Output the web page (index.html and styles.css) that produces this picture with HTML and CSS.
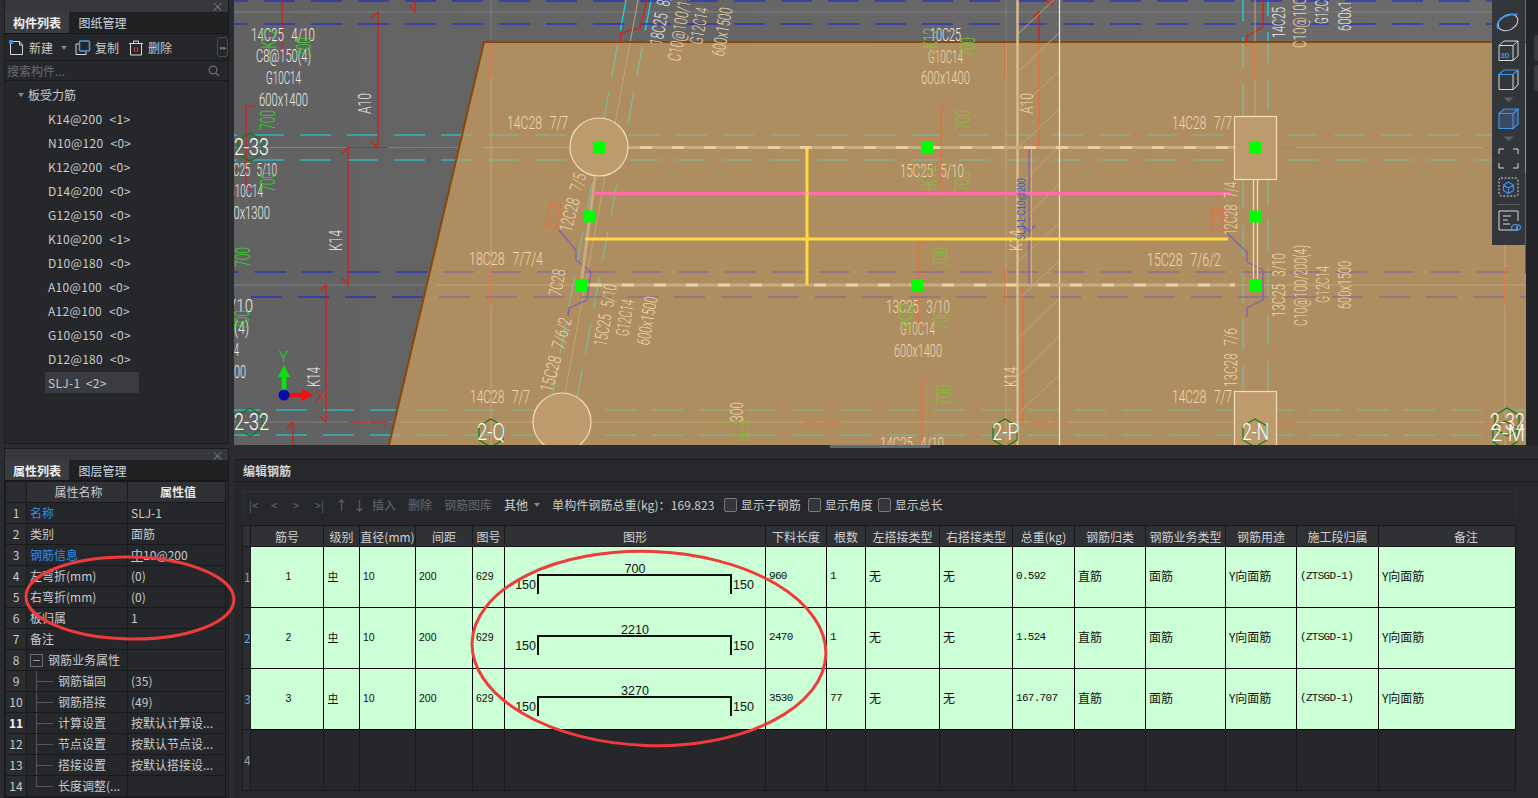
FILE: index.html
```html
<!DOCTYPE html>
<html lang="zh">
<head>
<meta charset="utf-8">
<title>编辑钢筋</title>
<link rel="stylesheet" href="styles.css">
</head>
<body>
<div class="app">
  <aside class="side">
    <section class="panel panel-top">
      <div class="strip"><span class="close">×</span></div>
      <div class="tabs"><span class="tab on">构件列表</span><span class="tab">图纸管理</span></div>
      <div class="tools">
        <svg class="ico" viewBox="0 0 16 16"><path class="w" d="M1.5 3.5v11h12V5l-3-3.500H4"/><path class="w" d="M10.500 1.500v3.500h3"/><path class="bl" d="M0 0h4v4H0z"/></svg>
        <span class="tl">新建</span><i class="caret"></i>
        <svg class="ico i2" viewBox="0 0 16 16"><path class="w" d="M4 4H1v10.500h10V12"/><rect class="b" x="4.500" y="1" width="10" height="10" rx="1"/></svg>
        <span class="tl">复制</span>
        <svg class="ico i3" viewBox="0 0 16 16"><path class="w" d="M1 3.500h14M5.500 3.500V1h5v2.500M2.500 3.500v11.500h11V3.500"/><path class="r" d="M6.500 7v5M9.500 7v5"/></svg>
        <span class="tl">删除</span>
        <span class="more">▸▸</span>
      </div>
      <div class="search"><span>搜索构件...</span>
        <svg class="find" viewBox="0 0 12 12"><circle cx="5" cy="5" r="3.800"/><path d="M8 8l3 3"/></svg>
      </div>
      <div class="tree">
        <div class="root"><i class="caret"></i>板受力筋</div>
        <div class="leaf">K14@200 &lt;1&gt;</div>
        <div class="leaf">N10@120 &lt;0&gt;</div>
        <div class="leaf">K12@200 &lt;0&gt;</div>
        <div class="leaf">D14@200 &lt;0&gt;</div>
        <div class="leaf">G12@150 &lt;0&gt;</div>
        <div class="leaf">K10@200 &lt;1&gt;</div>
        <div class="leaf">D10@180 &lt;0&gt;</div>
        <div class="leaf">A10@100 &lt;0&gt;</div>
        <div class="leaf">A12@100 &lt;0&gt;</div>
        <div class="leaf">G10@150 &lt;0&gt;</div>
        <div class="leaf">D12@180 &lt;0&gt;</div>
        <div class="leaf sel">SLJ-1 &lt;2&gt;</div>
      </div>
    </section>
    <section class="panel panel-bot">
      <div class="strip"><span class="close">×</span></div>
      <div class="tabs"><span class="tab on">属性列表</span><span class="tab">图层管理</span></div>
      <table class="props">
        <thead><tr><th class="pn"></th><th class="pk">属性名称</th><th class="pv strong">属性值</th></tr></thead>
        <tbody>
          <tr><td class="pn">1</td><td class="blue">名称</td><td>SLJ-1</td></tr>
          <tr><td class="pn">2</td><td>类别</td><td>面筋</td></tr>
          <tr><td class="pn">3</td><td class="blue">钢筋信息</td><td><u class="grade">中</u>10@200</td></tr>
          <tr><td class="pn">4</td><td>左弯折(mm)</td><td>(0)</td></tr>
          <tr><td class="pn">5</td><td>右弯折(mm)</td><td>(0)</td></tr>
          <tr><td class="pn">6</td><td>板归属</td><td>1</td></tr>
          <tr><td class="pn">7</td><td>备注</td><td></td></tr>
          <tr><td class="pn">8</td><td><div class="node"><i class="minus"></i>钢筋业务属性</div></td><td></td></tr>
          <tr><td class="pn">9</td><td class="sub"><div class="node"><i class="line"></i>钢筋锚固</div></td><td>(35)</td></tr>
          <tr><td class="pn">10</td><td class="sub"><div class="node"><i class="line"></i>钢筋搭接</div></td><td>(49)</td></tr>
          <tr><td class="pn bold">11</td><td class="sub"><div class="node"><i class="line"></i>计算设置</div></td><td>按默认计算设...</td></tr>
          <tr><td class="pn">12</td><td class="sub"><div class="node"><i class="line"></i>节点设置</div></td><td>按默认节点设...</td></tr>
          <tr><td class="pn">13</td><td class="sub"><div class="node"><i class="line"></i>搭接设置</div></td><td>按默认搭接设...</td></tr>
          <tr><td class="pn">14</td><td class="sub"><div class="node"><i class="line end"></i>长度调整(...</div></td><td></td></tr>
        </tbody>
      </table>
    </section>
  </aside>

  <main class="main">
    <div class="canvas-row">
      <div class="canvas">
        <svg class="cad" viewBox="234 0 1292 445" width="1292" height="445">
          <defs>
            <linearGradient id="sky"><stop class="s0" offset="0"/><stop class="s1" offset="1"/></linearGradient>
            <clipPath id="slab"><polygon points="484,42 1526,42 1526,445 389,445"/></clipPath>
            <polygon id="hex" points="0,-14 12,-7 12,7 0,14 -12,7 -12,-7"/>
            <g id="cyan">
              <path d="M206 135H1526M206 160H1526M229 410H1526M229 435H1526"/>
              <path d="M626 0L549 414M651 0L574 414M1243 -10V445M1268 -15V445"/>
            </g>
            <g id="blue">
              <path d="M217 24H1526M208 272H1526M204 297H1526M217 1H1526"/>
            </g>
            <g id="reds">
              <path d="M282 0V53H291M255 106H246V189H255M371 18L378 12V147.500M371 141L378 147.500M348 147.500H388M341 154L348 147.500V285M341 278L348 285M319 291L326 285V422M319 416L326 422M286 428L293 422V445M415 0V12L409 5M620 43L621 33L640 28L647 0M1263 0V27L1247 36L1246 46"/>
              <path d="M349 422H367M370 422H388M491 40V78M491 268V305M1005 40V78M1005 267V305M950 106H941V189H950M1033 18L1039 12V147.500M1033 141L1039 147.500M1028 147.500H1068M1023 154L1029 147.500M927 243H918V327H927M1017 291L1023 285V422M1017 416L1023 422M931 381H922V445"/>
              <path d="M803 422H821M823 422H842M1030 422H1048M1050 422H1068M1277 147.500H1296M1483 147.500H1497M1277 422H1296M1483 422H1520M1505 267V305M1255 43V79M1052 0V5L1046 0"/>
            </g>
          </defs>

          <rect fill="url(#sky)" x="234" y="0" width="1292" height="445"/>
          <path class="center" d="M234 12H1526M234 147.500H1526M234 285H1526M234 422H1526M491 0V445M1006 0V445"/>
          <use href="#cyan" class="c-bright"/>
          <use href="#blue" class="b-bright"/>
          <use href="#reds" class="r-bright"/>

          <polygon class="slabfill" points="484,42 1526,42 1526,445 389,445"/>
          <path class="center-s" d="M484 147.500H1526M436 285H1526M400 422H1526M491 42V445M1006 42V445M1255 0V116M1505 42V445M638 0L560 420"/>
          <use href="#cyan" class="c-mute" clip-path="url(#slab)"/>
          <use href="#blue" class="b-mute" clip-path="url(#slab)"/>
          <use href="#reds" class="r-mute" clip-path="url(#slab)"/>
          <path class="edge" d="M389 445L484 42H1526"/>

          <path class="hatch" d="M1018 34L1060 -6M1018 72L1060 32M1018 110L1060 70M1018 148L1060 108M1018 186L1060 146M1018 224L1060 184M1018 262L1060 222M1018 300L1060 260M1018 338L1060 298M1018 376L1060 336M1018 414L1060 374"/>
          <path class="wall" d="M1017.500 0V445"/>
          <path class="wall2" d="M1059.500 0V445"/>
          <path class="purple" d="M559 230L576 250V260L591 272L587 300L569 308L568 316M1227 233L1247 252V262L1263 270V300L1247 308V317M1029 147V285M1023 225L1029 232L1035 225"/>
          <path class="gridgrey" d="M1031.500 147V285"/>

          <path class="beam" d="M628 147.500H1235M585 285H1235M595 177L581 285"/>
          <path class="beamd" d="M640 147.500H1235M590 285H1235"/>
          <path class="beamv" d="M1253.500 180V285M1257.500 180V285"/>
          <path class="pink" d="M593 193.500H1231"/>
          <path class="yellow" d="M585 239H1228M807 148V285"/>

          <circle class="col" cx="599" cy="147" r="29"/>
          <circle class="col" cx="562" cy="422" r="29"/>
          <rect class="col" x="1234.500" y="116.500" width="42" height="63"/>
          <rect class="col" x="1234.500" y="391.500" width="42" height="60"/>

          <g class="sq">
            <rect x="593" y="141.500" width="12" height="12"/><rect x="921" y="141.500" width="12" height="12"/>
            <rect x="584" y="210.500" width="12" height="12"/><rect x="911" y="279" width="12" height="12"/>
            <rect x="575" y="279" width="12" height="12"/><rect x="1249" y="141.500" width="12" height="12"/>
            <rect x="1249" y="210.500" width="12" height="12"/><rect x="1249" y="279" width="12" height="12"/>
          </g>

          <g class="hexes">
            <use href="#hex" x="250" y="147"/><use href="#hex" x="250" y="422"/><use href="#hex" x="491" y="433"/>
            <use href="#hex" x="1005" y="433"/><use href="#hex" x="1255" y="433"/><use href="#hex" x="1507" y="422"/><use href="#hex" x="1505" y="435"/>
          </g>
          <path class="tick" d="M714 422H734M727 435H748M727 422H748M740 416L750 428M740 428L750 416M740 429L750 441M740 441L750 429"/>

          <g class="t wt">
            <text x="251" y="41" textLength="64" lengthAdjust="spacingAndGlyphs">14C25 4/10</text>
            <text x="256" y="62" textLength="55" lengthAdjust="spacingAndGlyphs">C8@150(4)</text>
            <text x="266" y="84" textLength="35" lengthAdjust="spacingAndGlyphs">G10C14</text>
            <text x="259" y="106" textLength="49" lengthAdjust="spacingAndGlyphs">600x1400</text>
            <text x="222" y="176" textLength="55" lengthAdjust="spacingAndGlyphs">15C25 5/10</text>
            <text x="228" y="197" textLength="35" lengthAdjust="spacingAndGlyphs">G10C14</text>
            <text x="221" y="219" textLength="49" lengthAdjust="spacingAndGlyphs">600x1300</text>
            <text x="222" y="312" textLength="31" lengthAdjust="spacingAndGlyphs">4/10</text>
            <text x="234" y="334" textLength="15" lengthAdjust="spacingAndGlyphs">(4)</text>
            <text x="234" y="356" textLength="5" lengthAdjust="spacingAndGlyphs">4</text>
            <text x="234" y="378" textLength="12" lengthAdjust="spacingAndGlyphs">00</text>
            <text x="930" y="41" textLength="31" lengthAdjust="spacingAndGlyphs">10C25</text>
            <text transform="rotate(-90 371 114)" x="371" y="114" textLength="21" lengthAdjust="spacingAndGlyphs">A10</text>
            <text transform="rotate(-90 342 251)" x="342" y="251" textLength="21" lengthAdjust="spacingAndGlyphs">K14</text>
            <text transform="rotate(-90 320 387)" x="320" y="387" textLength="20" lengthAdjust="spacingAndGlyphs">K14</text>
            <text transform="rotate(-90 1285 38)" x="1285" y="38" textLength="31" lengthAdjust="spacingAndGlyphs">14C25</text>
            <text transform="rotate(-90 1328 24)" x="1328" y="24" textLength="35" lengthAdjust="spacingAndGlyphs">G12C14</text>
            <text transform="rotate(-90 1351 31)" x="1351" y="31" textLength="49" lengthAdjust="spacingAndGlyphs">600x1500</text>
            <text transform="rotate(-80 662 46)" x="662" y="46" textLength="63" lengthAdjust="spacingAndGlyphs">18C25 8/10</text>
          </g>
          <g class="t tn">
            <text x="507" y="129" textLength="61" lengthAdjust="spacingAndGlyphs">14C28 7/7</text>
            <text x="469" y="265" textLength="74" lengthAdjust="spacingAndGlyphs">18C28 7/7/4</text>
            <text x="470" y="403" textLength="60" lengthAdjust="spacingAndGlyphs">14C28 7/7</text>
            <text x="1172" y="129" textLength="60" lengthAdjust="spacingAndGlyphs">14C28 7/7</text>
            <text x="1147" y="266" textLength="74" lengthAdjust="spacingAndGlyphs">15C28 7/6/2</text>
            <text x="1172" y="403" textLength="60" lengthAdjust="spacingAndGlyphs">14C28 7/7</text>
            <text x="900" y="177" textLength="64" lengthAdjust="spacingAndGlyphs">15C25 5/10</text>
            <text x="928" y="63" textLength="35" lengthAdjust="spacingAndGlyphs">G10C14</text>
            <text x="921" y="84" textLength="49" lengthAdjust="spacingAndGlyphs">600x1400</text>
            <text x="886" y="313" textLength="64" lengthAdjust="spacingAndGlyphs">13C25 3/10</text>
            <text x="900" y="335" textLength="35" lengthAdjust="spacingAndGlyphs">G10C14</text>
            <text x="894" y="357" textLength="48" lengthAdjust="spacingAndGlyphs">600x1400</text>
            <text x="880" y="450" textLength="64" lengthAdjust="spacingAndGlyphs">14C25 4/10</text>
            <text transform="rotate(-80 680 62)" x="680" y="62" textLength="88" lengthAdjust="spacingAndGlyphs">C10@100/150(4)</text>
            <text transform="rotate(-80 702 45)" x="702" y="45" textLength="37" lengthAdjust="spacingAndGlyphs">G12C14</text>
            <text transform="rotate(-80 724 57)" x="724" y="57" textLength="49" lengthAdjust="spacingAndGlyphs">600x1500</text>
            <text transform="rotate(-75 571 233)" x="571" y="233" textLength="60" lengthAdjust="spacingAndGlyphs">12C28 7/5</text>
            <text transform="rotate(-80 561 297)" x="561" y="297" textLength="27" lengthAdjust="spacingAndGlyphs">7C28</text>
            <text transform="rotate(-80 606 347)" x="606" y="347" textLength="63" lengthAdjust="spacingAndGlyphs">15C25 5/10</text>
            <text transform="rotate(-80 628 337)" x="628" y="337" textLength="37" lengthAdjust="spacingAndGlyphs">G12C14</text>
            <text transform="rotate(-80 649 346)" x="649" y="346" textLength="49" lengthAdjust="spacingAndGlyphs">600x1500</text>
            <text transform="rotate(-75 552 393)" x="552" y="393" textLength="76" lengthAdjust="spacingAndGlyphs">15C28 7/6/2</text>
            <text transform="rotate(-90 1306 48)" x="1306" y="48" textLength="88" lengthAdjust="spacingAndGlyphs">C10@100/150(4)</text>
            <text transform="rotate(-90 1237 235)" x="1237" y="235" textLength="53" lengthAdjust="spacingAndGlyphs">12C28 7/4</text>
            <text transform="rotate(-90 1285 317)" x="1285" y="317" textLength="64" lengthAdjust="spacingAndGlyphs">13C25 3/10</text>
            <text transform="rotate(-90 1307 326)" x="1307" y="326" textLength="81" lengthAdjust="spacingAndGlyphs">C10@100/200(4)</text>
            <text transform="rotate(-90 1329 303)" x="1329" y="303" textLength="37" lengthAdjust="spacingAndGlyphs">G12C14</text>
            <text transform="rotate(-90 1351 309)" x="1351" y="309" textLength="48" lengthAdjust="spacingAndGlyphs">600x1500</text>
            <text transform="rotate(-90 1237 387)" x="1237" y="387" textLength="59" lengthAdjust="spacingAndGlyphs">13C28 7/6</text>
            <text transform="rotate(-90 1033 114)" x="1033" y="114" textLength="21" lengthAdjust="spacingAndGlyphs">A10</text>
            <text transform="rotate(-90 1022 251)" x="1022" y="251" textLength="21" lengthAdjust="spacingAndGlyphs">K14</text>
            <text transform="rotate(-90 1017 387)" x="1017" y="387" textLength="20" lengthAdjust="spacingAndGlyphs">K14</text>
            <text transform="rotate(-90 743 422)" x="743" y="422" textLength="20" lengthAdjust="spacingAndGlyphs">300</text>
          </g>
          <g class="t or">
            <text transform="rotate(-80 558 230)" x="558" y="230" textLength="27" lengthAdjust="spacingAndGlyphs">5C28</text>
            <text transform="rotate(-90 1225 233)" x="1225" y="233" textLength="26" lengthAdjust="spacingAndGlyphs">5C28</text>
          </g>
          <g class="t gb">
            <text transform="rotate(-90 275 130)" x="275" y="130" textLength="20" lengthAdjust="spacingAndGlyphs">700</text>
            <text transform="rotate(-90 275 192)" x="275" y="192" textLength="20" lengthAdjust="spacingAndGlyphs">700</text>
            <text transform="rotate(-90 311 57)" x="311" y="57" textLength="20" lengthAdjust="spacingAndGlyphs">700</text>
            <text transform="rotate(-90 276 55)" x="276" y="55" textLength="27" lengthAdjust="spacingAndGlyphs">+K12</text>
            <text transform="rotate(-90 250 267)" x="250" y="267" textLength="20" lengthAdjust="spacingAndGlyphs">700</text>
            <text transform="rotate(-90 249 330)" x="249" y="330" textLength="20" lengthAdjust="spacingAndGlyphs">700</text>
          </g>
          <g class="t gm">
            <text transform="rotate(-90 970 130)" x="970" y="130" textLength="20" lengthAdjust="spacingAndGlyphs">700</text>
            <text transform="rotate(-90 970 192)" x="970" y="192" textLength="20" lengthAdjust="spacingAndGlyphs">700</text>
            <text transform="rotate(-90 975 57)" x="975" y="57" textLength="20" lengthAdjust="spacingAndGlyphs">700</text>
            <text transform="rotate(-90 938 55)" x="938" y="55" textLength="27" lengthAdjust="spacingAndGlyphs">+K12</text>
            <text transform="rotate(-90 936 193)" x="936" y="193" textLength="27" lengthAdjust="spacingAndGlyphs">+K12</text>
            <text transform="rotate(-90 948 267)" x="948" y="267" textLength="20" lengthAdjust="spacingAndGlyphs">700</text>
            <text transform="rotate(-90 948 330)" x="948" y="330" textLength="20" lengthAdjust="spacingAndGlyphs">700</text>
            <text transform="rotate(-90 913 330)" x="913" y="330" textLength="27" lengthAdjust="spacingAndGlyphs">+K12</text>
            <text transform="rotate(-90 951 405)" x="951" y="405" textLength="20" lengthAdjust="spacingAndGlyphs">700</text>
          </g>
          <text class="tiny" transform="rotate(-90 1025 240)" x="1025" y="240" textLength="62" lengthAdjust="spacingAndGlyphs">SLJ-1:C10@200</text>
          <g class="lbl">
            <text x="234" y="155" textLength="35" lengthAdjust="spacingAndGlyphs">2-33</text>
            <text x="234" y="430" textLength="35" lengthAdjust="spacingAndGlyphs">2-32</text>
            <text x="477" y="440" textLength="28" lengthAdjust="spacingAndGlyphs">2-Q</text>
            <text x="992" y="440" textLength="27" lengthAdjust="spacingAndGlyphs">2-P</text>
            <text x="1242" y="440" textLength="27" lengthAdjust="spacingAndGlyphs">2-N</text>
            <text x="1490" y="430" textLength="35" lengthAdjust="spacingAndGlyphs">2-32</text>
            <text x="1491" y="441" textLength="34" lengthAdjust="spacingAndGlyphs">2-M</text>
          </g>
          <g class="axis">
            <path class="ay" d="M284 395V376"/>
            <path class="ayh" d="M278 377H290L284 365Z"/>
            <path class="ax" d="M289 395H303"/>
            <path class="axh" d="M302 389V401L314 395Z"/>
            <circle cx="284" cy="395" r="5.500"/>
            <text class="ty" x="279" y="362">Y</text>
            <text class="tx" x="316" y="402">X</text>
          </g>
        </svg>
        <div class="view-tools">
          <svg viewBox="0 0 33 245" width="33" height="245">
            <ellipse class="vw" cx="16" cy="22.500" rx="10.500" ry="7.500" transform="rotate(-28 16 22.500)"/>
            <path class="vb2" d="M6.500 29C2.500 23 10 13.500 25.500 14.500"/>
            <path class="vw" d="M7 45.500h14v15H7zM7 45.500l5-4.500h14v15l-5 4.500M21 45.500l5-4.500"/>
            <text class="v3d" x="8.500" y="58">3D</text>
            <path class="vw" d="M7 74.500v15h14v-15M21 89.500l5-4.500V71"/>
            <path class="vb" d="M7 74.500l5-4.500h14l-5 4.500z"/>
            <path class="vtri2" d="M11.500 97.500h10l-5 4.500z"/>
            <path class="vfill" d="M7 113.500h14v15H7zM21 128.500l5-4.500v-15l-5 4.500zM7 113.500l5-4.500h14l-5 4.500z"/>
            <path class="vtri2" d="M11.500 136.500h10l-5 4.500z"/>
            <path class="vw" d="M7 154v-5h5M21 149h5v5M26 163v5h-5M12 168H7v-5"/>
            <rect class="vdash" x="7" y="178" width="19" height="18" rx="2"/>
            <path class="vb" d="M16.500 182l5 3v5.500l-5 3-5-3V185zM11.500 185l5 3 5-3M16.500 188v5.500"/>
            <path class="vsep" d="M5 204.500h23"/>
            <path class="vw" d="M25 226v4H7v-19h19v10"/>
            <path class="vw" d="M11 216h8M11 220h5M11 224h7"/>
            <ellipse class="vb" cx="24" cy="227.500" rx="4.500" ry="2.800"/>
          </svg>
        </div>
        <div class="vscroll"></div>
      </div>
      <div class="rstrip"><span class="rb"></span><span class="rb"></span></div>
    </div>
    <div class="splitter"><span class="grip"></span></div>
    <div class="head">编辑钢筋</div>
    <div class="editor">
      <div class="bar">
        <span class="dim nav">|&lt;</span><span class="dim nav">&lt;</span><span class="dim nav">&gt;</span><span class="dim nav">&gt;|</span>
        <span class="dim arrow">↑</span><span class="dim arrow">↓</span>
        <span class="dim act first">插入</span><span class="dim act">删除</span><span class="dim act">钢筋图库</span>
        <span class="act lit">其他</span><i class="caret"></i>
        <span class="total">单构件钢筋总重(kg)：169.823</span>
        <i class="chk c1"></i><span>显示子钢筋</span>
        <i class="chk"></i><span>显示角度</span>
        <i class="chk"></i><span>显示总长</span>
      </div>
      <table class="grid">
        <colgroup>
          <col class="w8"><col class="w73"><col class="w36"><col class="w56"><col class="w57"><col class="w32"><col class="w261"><col class="w61"><col class="w39"><col class="w74"><col class="w73b"><col class="w62"><col class="w71"><col class="w80"><col class="w71"><col class="w82"><col class="w137">
        </colgroup>
        <thead>
          <tr><th></th><th>筋号</th><th>级别</th><th>直径(mm)</th><th>间距</th><th>图号</th><th>图形</th><th>下料长度</th><th>根数</th><th>左搭接类型</th><th>右搭接类型</th><th>总重(kg)</th><th>钢筋归类</th><th>钢筋业务类型</th><th>钢筋用途</th><th>施工段归属</th><th class="memo">备注</th></tr>
        </thead>
        <tbody>
          <tr class="data"><td class="rh">1</td><td class="ctr n">1</td><td class="gr"><u class="grade">中</u></td><td class="n">10</td><td class="n">200</td><td class="n">629</td>
            <td class="shape"><svg viewBox="0 0 261 60" width="261" height="60"><path d="M33 47V28H226V47"/><text class="s-m" x="130" y="26">700</text><text class="s-l" x="31" y="42">150</text><text class="s-r" x="228" y="42">150</text></svg></td>
            <td class="m">960</td><td class="m">1</td><td>无</td><td>无</td><td class="m">0.592</td><td>直筋</td><td>面筋</td><td>Y向面筋</td><td class="m">(ZTSGD-1)</td><td>Y向面筋</td></tr>
          <tr class="data"><td class="rh">2</td><td class="ctr n">2</td><td class="gr"><u class="grade">中</u></td><td class="n">10</td><td class="n">200</td><td class="n">629</td>
            <td class="shape"><svg viewBox="0 0 261 60" width="261" height="60"><path d="M33 47V28H226V47"/><text class="s-m" x="130" y="26">2210</text><text class="s-l" x="31" y="42">150</text><text class="s-r" x="228" y="42">150</text></svg></td>
            <td class="m">2470</td><td class="m">1</td><td>无</td><td>无</td><td class="m">1.524</td><td>直筋</td><td>面筋</td><td>Y向面筋</td><td class="m">(ZTSGD-1)</td><td>Y向面筋</td></tr>
          <tr class="data"><td class="rh">3</td><td class="ctr n">3</td><td class="gr"><u class="grade">中</u></td><td class="n">10</td><td class="n">200</td><td class="n">629</td>
            <td class="shape"><svg viewBox="0 0 261 60" width="261" height="60"><path d="M33 47V28H226V47"/><text class="s-m" x="130" y="26">3270</text><text class="s-l" x="31" y="42">150</text><text class="s-r" x="228" y="42">150</text></svg></td>
            <td class="m">3530</td><td class="m">77</td><td>无</td><td>无</td><td class="m">167.707</td><td>直筋</td><td>面筋</td><td>Y向面筋</td><td class="m">(ZTSGD-1)</td><td>Y向面筋</td></tr>
          <tr class="empty"><td class="rh">4</td><td></td><td></td><td></td><td></td><td></td><td></td><td></td><td></td><td></td><td></td><td></td><td></td><td></td><td></td><td></td><td></td></tr>
        </tbody>
      </table>
    </div>
  </main>
</div>
<svg class="marks" viewBox="0 0 1538 798" width="1538" height="798">
  <ellipse cx="130" cy="598" rx="104" ry="41" transform="rotate(1 130 598)"/>
  <ellipse cx="649" cy="648.500" rx="177" ry="97" transform="rotate(2 649 648)"/>
</svg>
</body>
</html>
```
FILE: styles.css
```css
* { box-sizing: border-box; }
html, body { margin: 0; height: 100%; }
body {
  width: 1538px; height: 798px; overflow: hidden; position: relative;
  background: #2b2d30; color: #c9cbcd;
  font: 12px/20px "Noto Sans CJK SC", "Liberation Sans", sans-serif;
}
i { display: block; font-style: normal; }
.app { display: flex; height: 798px; }

/* left column */
.side { width: 234px; flex: none; padding: 0 5px 0 4px; display: flex; flex-direction: column; gap: 4px; background: #2a2c2f; }
.panel { background: #25272a; border: 1px solid #1b1c1e; border-top: 0; }
.panel-top { height: 444px; }
.panel-bot { height: 350px; border-top: 1px solid #1b1c1e; }
.strip { height: 12px; background: #36383c; display: flex; justify-content: flex-end; }
.panel-bot .strip { height: 11px; }
.close { color: #77797c; font-size: 13px; line-height: 11px; margin-right: 4px; }
.tabs { height: 22px; display: flex; background: #1f2123; border-bottom: 1px solid #17181a; }
.panel-bot .tabs { height: 21px; }
.tab { width: 67px; text-align: center; line-height: 22px; color: #c7d5e2; }
.panel-bot .tab { line-height: 21px; }
.tab.on { background: #3a3c40; color: #f0f0f0; font-weight: 700; width: 64px; }
.tools { height: 27px; display: flex; align-items: center; padding: 2px 0 0 4px; border-bottom: 1px solid #1a1b1d; position: relative; }
.ico { width: 16px; height: 16px; flex: none; }
.ico path, .ico rect { fill: none; stroke-width: 1; }
.ico .w { stroke: #d8d8d8; }
.ico .b { stroke: #4a9cf0; stroke-width: 1.5; fill: #25272a; }
.ico .r { stroke: #e03a3a; }
.ico .bl { fill: #3d8fe6; stroke: none; }
.i2 { margin-left: 8px; }
.i3 { margin-left: 9px; }
.tl { margin-left: 4px; color: #c9cbcd; }
.caret { width: 0; height: 0; border: 3px solid transparent; border-top: 4px solid #85878a; border-bottom: 0; }
.tools .caret { margin: 0 0 0 8px; }
.more { position: absolute; left: 212px; top: 3px; width: 11px; height: 20px; border: 1px solid #4a4c50; border-radius: 3px; color: #77797c; font-size: 7px; line-height: 18px; text-align: center; letter-spacing: -1px; }
.search { height: 20px; padding: 0 8px 0 2px; display: flex; justify-content: space-between; align-items: center; color: #6b6d70; border-bottom: 1px solid #1a1b1d; }
.find { width: 12px; height: 12px; }
.find circle, .find path { fill: none; stroke: #6b6d70; stroke-width: 1.3; }
.tree { padding-top: 2px; }
.root { height: 24px; line-height: 24px; padding-left: 13px; display: flex; align-items: center; color: #c9cbcd; }
.root .caret { margin-right: 4px; }
.leaf { height: 24px; line-height: 24px; padding-left: 43px; letter-spacing: .3px; word-spacing: 4px; }
.leaf.sel { width: 94px; height: 21px; line-height: 21px; margin: 1px 0 0 40px; padding-left: 3px; background: #3a3c40; word-spacing: 2.500px; }

.props { width: 221px; margin-left: 0; border-collapse: collapse; table-layout: fixed; }
.props th, .props td { height: 21px; padding: 0 0 0 3px; border: 1px solid #191a1c; font-weight: 400; white-space: nowrap; overflow: hidden; }
.props th { background: #2f3135; text-align: center; }
.props .pn { width: 21px; padding: 0; text-align: center; background: #2a2c2f; }
.props .pk { width: 101px; }
.props .strong { font-weight: 700; color: #e4e4e4; }
.props .blue { color: #2f8fe8; }
.props .bold { font-weight: 700; color: #eee; }
.props .sub { padding-left: 3px; }
.node { display: flex; align-items: center; height: 20px; }
.minus { width: 13px; height: 13px; border: 1px solid #6d6f72; margin-right: 5px; position: relative; flex: none; background: linear-gradient(#9a9a9a, #9a9a9a) center / 7px 1px no-repeat; }
.line { width: 28px; height: 21px; flex: none; background: linear-gradient(#55575a, #55575a) 6px 0 / 1px 100% no-repeat, linear-gradient(#55575a, #55575a) 6px 50% / 17px 1px no-repeat; }
.line.end { background: linear-gradient(#55575a, #55575a) 6px 0 / 1px 50% no-repeat, linear-gradient(#55575a, #55575a) 6px 50% / 17px 1px no-repeat; }
.grade { text-decoration: underline; text-underline-offset: 1px; }

/* right column */
.main { flex: 1; min-width: 0; display: flex; flex-direction: column; }
.canvas-row { height: 445px; display: flex; }
.canvas { width: 1292px; height: 445px; position: relative; overflow: hidden; }
.cad { display: block; }
.rstrip { flex: 1; background: #232528; padding: 35px 0 0 8px; display: flex; flex-direction: column; gap: 4px; }
.rb { height: 26px; background: #3a3c40; border-radius: 2px 0 0 2px; }
.splitter { height: 15px; background: #2b2d30; position: relative; border-bottom: 1px solid #1b1c1e; }
.grip { display: block; width: 100px; height: 3px; margin-left: 596px; background: #5d6a78; }
.head { height: 22px; line-height: 22px; padding-left: 9px; background: #26282b; color: #d4d4d4; font-weight: 700; border-bottom: 1px solid #1b1c1e; }
.editor { flex: 1; padding: 9px 0 0 9px; background: #26282b; }
.bar { width: 1273px; height: 27px; display: flex; align-items: center; border: 1px solid #2f3134; border-width: 1px 1px 0 1px; padding-left: 5px; margin-bottom: 7px; color: #c9cbcd; }
.dim { color: #66686b; }
.nav { width: 22px; font-size: 11px; }
.arrow { width: 18px; font-size: 13px; margin-left: 0; }
.nav + .arrow { margin-left: -2px; }
.act { margin-right: 12px; }
.act.first { margin-left: 1px; }
.lit { color: #d0d0d0; margin-right: 6px; }
.bar .caret { margin-right: 12px; }
.total { margin-right: 9px; letter-spacing: .1px; }
.chk { width: 13px; height: 14px; border: 1px solid #77797c; border-radius: 2px; background: #34363a; margin-right: 4px; }
.bar .chk + span + .chk { margin-left: 7px; }
.bar .chk + span + .chk + span + .chk { margin-left: 5px; }

.grid { width: 1273px; margin-left: -1px; border-collapse: collapse; table-layout: fixed; }
.w8 { width: 8px; } .w73 { width: 73px; } .w36 { width: 36px; } .w56 { width: 56px; } .w57 { width: 57px; }
.w32 { width: 32px; } .w261 { width: 261px; } .w61 { width: 61px; } .w39 { width: 39px; } .w74 { width: 74px; }
.w73b { width: 73px; } .w62 { width: 62px; } .w71 { width: 71px; } .w80 { width: 80px; } .w82 { width: 82px; } .w137 { width: 137px; }
.grid th { height: 20px; line-height: 18px; background: #2f3135; color: #cfd0d2; font-weight: 400; padding: 2px 0 0; border: 1px solid #191a1c; white-space: nowrap; overflow: hidden; }
.grid th.memo { padding-left: 38px; }
.grid td { height: 61px; padding: 0 0 3px 3px; white-space: nowrap; overflow: hidden; }
.data td { background: #cbffd5; color: #111; border: 1px solid #000; }
.data .rh, .empty .rh { background: #2b2d30; color: #6fa6cf; padding: 0 0 0 1px; border: 1px solid #191a1c; }
.empty .rh { color: #9a9c9e; }
.empty td { background: #25272a; border: 1px solid #191a1c; }
.ctr { text-align: center; }
.data .gr { padding-left: 4px; font-size: 10px; }
.m { font-family: "Liberation Mono", monospace; font-size: 11px; letter-spacing: -.7px; }
.n { font-family: "Liberation Sans", sans-serif; font-size: 10.500px; }
.shape { padding: 0 !important; }
.shape svg { display: block; }
.shape path { fill: none; stroke: #111; stroke-width: 2; }
.shape text { font: 12.500px "Liberation Sans", sans-serif; fill: #111; }
.s-m { text-anchor: middle; }
.s-l { text-anchor: end; }

/* CAD drawing */
.s0 { stop-color: #626262; }
.s1 { stop-color: #6c6c6c; }
.slabfill { fill: #ae8d61; }
.edge { fill: none; stroke: #87480a; stroke-width: 2; }
.cad path { fill: none; }
.center { stroke: #7e7e7e; stroke-width: 1; }
.center-s { stroke: #c5a578; stroke-width: 1; fill: none; }
.c-bright { fill: none; stroke: #14e0e6; stroke-width: 1.200; stroke-dasharray: 31 16; }
.c-mute { fill: none; stroke: #7fbc9c; stroke-width: 1.200; stroke-dasharray: 31 16; }
.b-bright { fill: none; stroke: #0f1fe0; stroke-width: 1.200; stroke-dasharray: 31 16; }
.b-mute { fill: none; stroke: #7d62a8; stroke-width: 1.200; stroke-dasharray: 31 16; }
.r-bright { fill: none; stroke: #e01818; stroke-width: 1.200; }
.r-mute { fill: none; stroke: #ef6a3a; stroke-width: 1.200; }
.hatch { stroke: #c5a578; stroke-width: 1; }
.wall { stroke: #d8bb90; stroke-width: 2.500; }
.wall2 { stroke: #ffe9cc; stroke-width: 1.200; }
.purple { stroke: #7a5fb0; stroke-width: 1.200; }
.gridgrey { stroke: #b9b0b0; stroke-width: 1; }
.beam { stroke: #c9ab80; stroke-width: 3; }
.beamd { stroke: #e8cfa6; stroke-width: 3; stroke-dasharray: 12 20; }
.beamv { stroke: #f5dcb5; stroke-width: 1.200; }
.pink { stroke: #ff6fa8; stroke-width: 3; }
.yellow { stroke: #ffd93d; stroke-width: 3; }
.col { fill: #bd9b6d; stroke: #f5dcb5; stroke-width: 1.200; }
.sq rect { fill: #00ff00; }
.hexes use { fill: none; stroke: #0f7a14; stroke-width: 1.200; }
.tick { stroke: #7fc12a; stroke-width: 1; }
.t text { font: 300 18px Roboto, "Liberation Sans", sans-serif; word-spacing: 7px; }
.wt text { fill: #ececec; }
.tn text { fill: #f0d8b0; }
.or text { fill: #ef6a3a; }
.gb text { fill: #35d827; font-size: 21px; }
.gm text { fill: #80c33a; font-size: 21px; }
.tiny { font: 10px "Liberation Sans", sans-serif; fill: #2f5fb8; }
.lbl text { font: 300 23px Roboto, "Liberation Sans", sans-serif; fill: #fff; }
.axis circle { fill: #0a0aa8; }
.ay { stroke: #10e010; stroke-width: 5; }
.axis .ayh { fill: #10e010; }
.ax { stroke: #f01010; stroke-width: 4; }
.axis .axh { fill: #f01010; }
.ty { font: 300 15px Roboto, sans-serif; fill: #10e010; }
.tx { font: 300 15px Roboto, sans-serif; fill: #f01010; }

.view-tools { position: absolute; left: 1258px; top: 0; width: 33px; height: 245px; background: #33363a; }
.view-tools svg { display: block; }
.vw { fill: none; stroke: #d8d8d8; stroke-width: 1; }
.vb { fill: none; stroke: #3f94ea; stroke-width: 1.200; }
.vb2 { fill: none; stroke: #3f94ea; stroke-width: 1.600; }
.v3d { font: 700 7px "Liberation Sans", sans-serif; fill: #3f94ea; }
.vtri2 { fill: #5b6068; }
.vfill { fill: #3a4a60; stroke: #3f94ea; stroke-width: 1.200; }
.vdash { fill: none; stroke: #d8d8d8; stroke-width: 1; stroke-dasharray: 2 1.500; }
.vsep { stroke: #5a5c60; stroke-width: 1; fill: none; }
.vscroll { position: absolute; left: 1291px; top: 173px; width: 1px; height: 100px; background: #5d6570; }

.marks { position: absolute; left: 0; top: 0; pointer-events: none; }
.marks ellipse { fill: none; stroke: #ef3b3b; stroke-width: 3; }
```
